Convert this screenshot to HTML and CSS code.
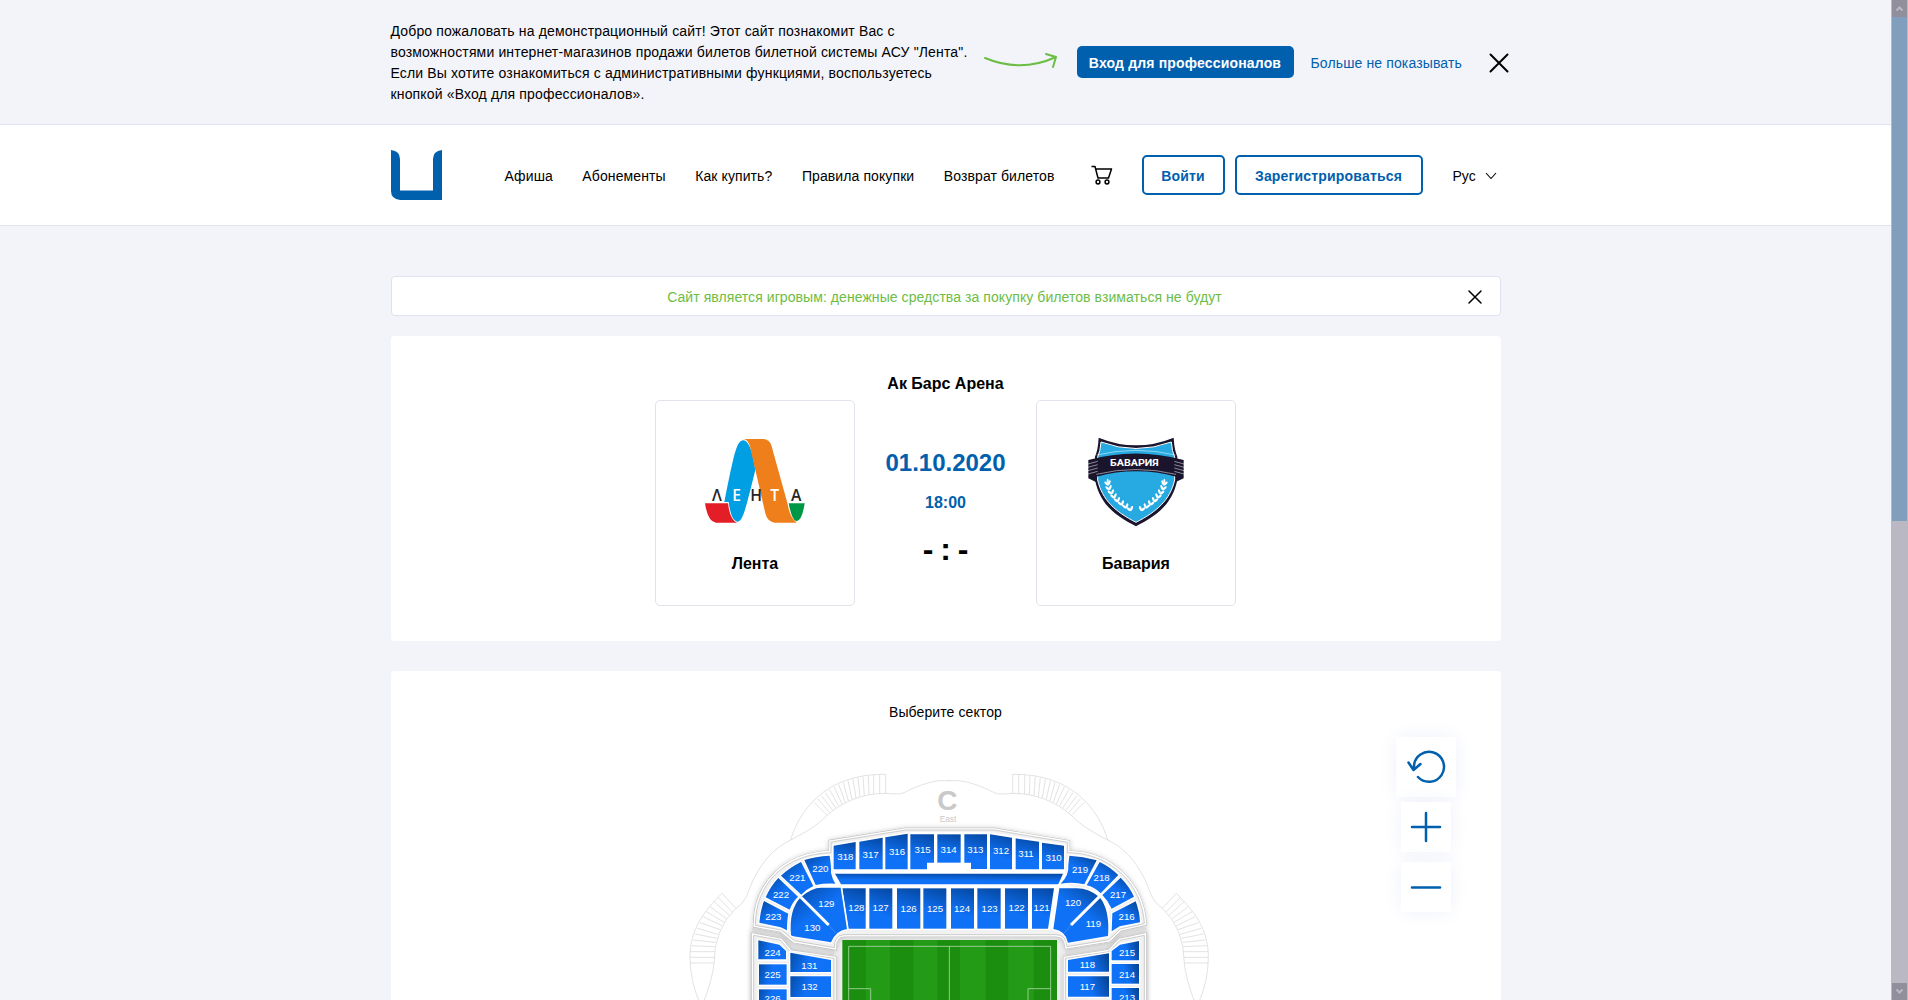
FILE: index.html
```html
<!DOCTYPE html>
<html lang="ru">
<head>
<meta charset="utf-8">
<title>Лента — Бавария</title>
<link rel="stylesheet" href="styles.css">
</head>
<body>
<div class="page">
  <div class="promo">
    <div class="container promo-row">
      <p class="promo-text">Добро пожаловать на демонстрационный сайт! Этот сайт познакомит Вас с<br>возможностями интернет-магазинов продажи билетов билетной системы АСУ "Лента".<br>Если Вы хотите ознакомиться с административными функциями, воспользуетесь<br>кнопкой «Вход для профессионалов».</p>
      <svg class="promo-arrow" width="74" height="18" viewBox="0 0 74 18"><path d="M1 6Q37 21 72 5M62 2L72 5L69 15" fill="none" stroke="#6cbd45" stroke-width="2" stroke-linecap="round" stroke-linejoin="round"/></svg>
      <a class="btn-pro">Вход для профессионалов</a>
      <a class="promo-hide">Больше не показывать</a>
      <svg class="promo-close" width="20" height="20" viewBox="0 0 20 20"><path d="M1.500 1.500L18.500 18.500M18.500 1.500L1.500 18.500" stroke="#000" stroke-width="2" stroke-linecap="round"/></svg>
    </div>
  </div>

  <header class="header">
    <div class="container header-row">
      <svg class="logo" width="51" height="50" viewBox="0 0 51 50"><path d="M0 0Q9 1 9 9V40.500H42V9Q42 1 51 0V50H9Q0 49 0 41Z" fill="#0060ae"/></svg>
      <nav class="nav"><a>Афиша</a><a>Абонементы</a><a>Как купить?</a><a>Правила покупки</a><a>Возврат билетов</a></nav>
      <svg class="cart" width="22" height="20" viewBox="0 0 22 20"><g fill="none" stroke="#000" stroke-width="1.500" stroke-linejoin="round"><path d="M.5 1.500H4L7 13H17.500L20.500 4H5"/><circle cx="7" cy="17" r="1.900"/><circle cx="16" cy="17" r="1.900"/></g></svg>
      <a class="btn login">Войти</a>
      <a class="btn signup">Зарегистрироваться</a>
      <div class="lang">Рус<svg width="12" height="8" viewBox="0 0 12 8"><path d="M1 1L6 6.500L11 1" fill="none" stroke="#000" stroke-width="1.100"/></svg></div>
    </div>
  </header>

  <main class="container">
    <div class="notice">
      <span>Сайт является игровым: денежные средства за покупку билетов взиматься не будут</span>
      <svg class="notice-close" width="14" height="14" viewBox="0 0 14 14"><path d="M1 1L13 13M13 1L1 13" stroke="#000" stroke-width="1.500" stroke-linecap="round"/></svg>
    </div>

    <section class="card match">
      <h2>Ак Барс Арена</h2>
      <div class="match-row">
        <div class="team">
          <svg width="120" height="110" viewBox="0 0 360 330">
            <path d="M30 235H99Q105 285 126 293H63Q38 290 30 235Z" fill="#e31e26"/>
            <path d="M145 46C124 48 118 85 88 231H101Q108 286 126 290C143 291 150 260 181 135Q168 47 145 46Z" fill="#009fe3"/>
            <path d="M147 42H207Q224 44 229 61L278 237Q284 276 305 293H238Q217 290 211 265L164 61Q158 45 147 42Z" fill="#ef7f1a"/>
            <path d="M281 235H329Q321 288 304 289Q290 285 281 235Z" fill="#009846"/>
            <g class="lenta-text" fill="#252525"><text x="51" y="229">Λ</text><text x="112" y="229" fill="#fff">Е</text><text x="166" y="229">Н</text><text x="226" y="229" fill="#fff">Т</text><text x="288" y="229">А</text></g>
          </svg>
          <b>Лента</b>
        </div>
        <div class="score">
          <div class="date">01.10.2020</div>
          <div class="time">18:00</div>
          <div class="result">- : -</div>
        </div>
        <div class="team">
          <svg class="crest" width="120" height="110" viewBox="0 0 360 330">
            <defs><g id="leaf"><ellipse cx="-7" cy="0" rx="8" ry="3.500" transform="rotate(38)"/><ellipse cx="7" cy="0" rx="8" ry="3.500" transform="rotate(-68)"/></g>
            <g id="laurel" fill="#fff"><use href="#leaf" x="85" y="180"/><use href="#leaf" x="88" y="194"/><use href="#leaf" x="95" y="207"/><use href="#leaf" x="103" y="219"/><use href="#leaf" x="113" y="230"/><use href="#leaf" x="125" y="240"/><use href="#leaf" x="138" y="249"/><use href="#leaf" x="152" y="257"/><ellipse cx="83" cy="168" rx="3" ry="7"/></g></defs>
            <path d="M56 38Q168 84 281 38Q283 75 292 95V165C277 235 238 267 168 304C98 267 60 235 45 165V95Q54 75 56 38Z" fill="#1a152d"/>
            <path d="M63 51Q168 90 274 51Q276 80 284 96V165C270 226 230 260 168 292C106 260 67 226 53 165V96Q61 80 63 51Z" fill="#27a9e1" stroke="#fff" stroke-width="3"/>
            <path d="M25 105Q167 66 311 105V160L289 170V155Q168 123 49 155V172L25 160Z" fill="#1a152d"/>
            <g fill="none" stroke="#fff" stroke-width="1.500"><path d="M50 90Q168 62 286 90M49 148Q168 119 288 148"/><path d="M24 117L53 109M24 127L53 119M24 137L53 129M24 147L53 139M312 117L283 109M312 127L283 119M312 137L283 129M312 147L283 139"/></g>
            <text class="bav-text" x="90" y="124" textLength="146" lengthAdjust="spacingAndGlyphs">БАВАРИЯ</text>
            <use href="#laurel"/><use href="#laurel" transform="translate(336) scale(-1 1)"/>
          </svg>
          <b>Бавария</b>
        </div>
      </div>
    </section>

    <section class="card sectors">
      <p>Выберите сектор</p>
      <svg class="map" width="540" height="240" viewBox="0 0 1620 720">
        <defs>
          <linearGradient id="up" x1=".65" y1="0" x2=".45" y2="1"><stop offset="0" stop-color="#064ba8"/><stop offset=".65" stop-color="#0f71f6"/></linearGradient>
          <linearGradient id="lt" x1="0" y1=".3" x2="1" y2=".5"><stop offset="0" stop-color="#0650b0"/><stop offset=".45" stop-color="#0f71f6"/></linearGradient>
          <linearGradient id="rt" x1="1" y1=".3" x2="0" y2=".5"><stop offset="0" stop-color="#064597"/><stop offset=".5" stop-color="#0f71f6"/></linearGradient>
          <linearGradient id="cl" x1=".1" y1="0" x2=".7" y2=".8"><stop offset="0" stop-color="#064ba8"/><stop offset=".6" stop-color="#0f71f6"/></linearGradient>
          <linearGradient id="cr" x1=".9" y1="0" x2=".3" y2=".8"><stop offset="0" stop-color="#064597"/><stop offset=".6" stop-color="#0f71f6"/></linearGradient>
          <filter id="sh" x="-5%" y="-5%" width="110%" height="110%"><feDropShadow dx="0" dy="1" stdDeviation="8" flood-opacity=".2"/></filter>
          <g id="outer" fill="none" stroke="#dcdcdc" stroke-width="2.500">
            <path d="M168 445C204 420 202 395 222 355C250 300 285 262 332 240C380 215 412 196 441 166C490 123 550 100 617 100C672 105 665 100 697 86Q745 65 780 62H812"/>
            <path d="M332 240C355 160 430 40 617 43V100"/>
            <path d="M168 445L126 400C70 455 30 510 30 592Q30 665 62 735M168 445Q103 505 102 610Q98 655 68 735"/>
            <path d="M402 127l39 39M413 116l36 42M424 107l34 44M436 98l31 46M449 89l27 49M462 81l24 51M476 73l19 53M490 67l15 55M504 62l12 56M519 57l9 57M534 53l6 57M549 50l4 57M565 47l2 57M581 45v57M599 44v57"/>
            <path d="M114 412l43 44M102 425l46 41M90 440l50 37M79 455l54 32M70 470l57 28M60 488l61 21M52 505l62 18M45 522l66 13M39 540l69 7M35 557l70 3M31 575h73M30 592h73M30 609h72"/>
          </g>
          <path id="bowl" d="M226 496C226 370 315 282 453 278V246L677 210H942L1163 247V278C1300 279 1387 380 1393 491L1320 507L1287 539L1161 560Q1158 524 1128 524H492Q462 526 463 563L343 542L304 510Z"/>
          <path id="left" d="M221 526L302 541L331 576L462 595V760H221Z"/>
          <path id="right" d="M1393 526L1320 541L1287 575L1156 595V760H1393Z"/>
        </defs>
        <use href="#outer"/><use href="#outer" transform="translate(1615) scale(-1 1)"/>
        <path d="M215 502V760H1400V502L1160 550H470Z" fill="#e6e6e6" filter="url(#sh)"/>
        <rect x="462" y="524" width="694" height="220" fill="#eee"/>
        <g fill="#f1f1f1" stroke-linejoin="miter"><g stroke="#c3c3c3" stroke-width="15" filter="url(#sh)"><use href="#bowl"/><use href="#left"/><use href="#right"/></g><g stroke="#fff" stroke-width="11"><use href="#bowl"/><use href="#left"/><use href="#right"/></g><g stroke="#c3c3c3" stroke-width="2.500"><use href="#bowl"/><use href="#left"/><use href="#right"/></g></g>
        <path d="M458 254L690 216H930L1156 252L1156 374L1285 400L1290 505L1128 510H492L325 510L355 390L462 370Z" fill="#fff"/>
        <g stroke="#fff" stroke-width="8" stroke-linejoin="miter" paint-order="stroke">
          <g fill="url(#up)">
            <path d="M461 257L527 246V328H461Z"/><path d="M538 245L608 233V328H538Z"/><path d="M616 232L683 221V328H616Z"/><path d="M691 223H762V308H741V328H691Z"/><path d="M772 223H842V308H772Z"/><path d="M853 223H921V327H873V308H853Z"/><path d="M930 223L996 233V328H930Z"/><path d="M1007 235L1077 245V328H1007Z"/><path d="M1086 248L1152 257V328H1086Z"/>
            <path d="M465 341H1149L1135 373H483Z"/>
            <path d="M487 385H557V506H506Z"/><path d="M568 385H637V506H568Z"/><path d="M651 385H721V506H651Z"/><path d="M730 385H799V506H730Z"/><path d="M813 385H882V506H813Z"/><path d="M892 385H962V506H892Z"/><path d="M975 385H1044V506H975Z"/><path d="M1056 385H1122L1104 506H1056Z"/>
          </g>
          <g fill="url(#cl)"><path d="M373 300Q406 289 449 287Q454 320 453 338Q457 357 466 371Q430 370 407 375Z"/><path d="M303 347Q330 322 363 306L400 378Q378 388 364 404Z"/><path d="M257 412Q272 378 295 354L354 410Q336 428 329 449Z"/><path d="M238 488Q242 448 252 423L325 461Q321 480 321 511L302 502Z"/><path d="M333 526Q326 450 362 412Q395 382 426 383H482L501 507Q467 512 453 547L340 529Z"/></g>
          <g fill="url(#cr)"><path d="M1168 287Q1210 289 1250 301L1213 373Q1180 365 1142 371Q1168 345 1165 314Z"/><path d="M1259 306Q1290 321 1315 345L1262 400Q1242 380 1220 376Z"/><path d="M1322 353Q1348 379 1362 410L1295 446Q1285 423 1267 405Z"/><path d="M1297 460L1367 424Q1379 455 1380 487L1319 499L1295 514Z"/><path d="M1138 385H1185Q1225 383 1259 412Q1290 450 1284 528L1164 548Q1158 513 1120 507Z"/></g>
          <g fill="url(#lt)"><path d="M235 541L298 554L318 573V598H235Z"/><path d="M237 613H320V674H237Z"/><path d="M237 688H320V730H237Z"/><path d="M331 578L453 600V636H331Z"/><path d="M331 649H453V711H331Z"/></g>
          <g fill="url(#rt)"><path d="M1377 543V601H1295V573L1320 554Z"/><path d="M1295 612H1377V671H1295Z"/><path d="M1295 684H1377V730H1295Z"/><path d="M1164 600L1287 580V635H1164Z"/><path d="M1164 649H1287V710H1164Z"/></g>
        </g>
        <path d="M362 411L446 495M1259 409L1173 495" stroke="#fff" stroke-width="9"/><path d="M446 495L468 520M1173 495L1150 522" stroke="#8fbdf5"/>
        <rect x="487" y="540" width="644" height="190" fill="#1b8e10"/>
        <path d="M558 540h72v190h-72zM700 540h72v190h-72zM840 540h77v190h-77zM985 540h76v190h-76z" fill="#239b17"/>
        <path d="M506 735V559H1112V735M808 559V735M506 686H572V735M1112 686H1044V735" fill="none" stroke="#a9d6a4" stroke-width="2.500"/>
        <g class="map-side"><text class="side-letter" x="802" y="151">C</text><text class="side-name" x="804" y="187">East</text></g>
        <g class="map-labels">
          <text x="496" y="301">318</text><text x="572" y="293">317</text><text x="651" y="284">316</text><text x="728" y="278">315</text><text x="806" y="278">314</text><text x="886" y="278">313</text><text x="963" y="282">312</text><text x="1038" y="291">311</text><text x="1121" y="302">310</text>
          <text x="421" y="336">220</text><text x="352" y="363">221</text><text x="303" y="414">222</text><text x="280" y="480">223</text><text x="439" y="440">129</text><text x="397" y="512">130</text>
          <text x="529" y="453">128</text><text x="602" y="453">127</text><text x="686" y="455">126</text><text x="765" y="455">125</text><text x="846" y="455">124</text><text x="929" y="455">123</text><text x="1010" y="453">122</text><text x="1085" y="453">121</text>
          <text x="1179" y="438">120</text><text x="1240" y="501">119</text><text x="1200" y="338">219</text><text x="1265" y="363">218</text><text x="1314" y="414">217</text><text x="1340" y="481">216</text>
          <text x="278" y="588">224</text><text x="278" y="655">225</text><text x="278" y="727">226</text><text x="388" y="626">131</text><text x="389" y="690">132</text>
          <text x="1341" y="588">215</text><text x="1341" y="654">214</text><text x="1341" y="722">213</text><text x="1222" y="625">118</text><text x="1222" y="690">117</text>
        </g>
      </svg>
      <div class="zoom-tools">
        <button class="reset"><svg width="60" height="60" viewBox="0 0 60 60"><path d="M22 40A15 15 0 1 0 18 29L17.500 33M12.500 25.500L17.500 33L24.500 27" fill="none" stroke="#0060ae" stroke-width="2.500" stroke-linecap="round" stroke-linejoin="round"/></svg></button>
        <button><svg width="50" height="50" viewBox="0 0 50 50"><path d="M11 25H39M25 11V39" stroke="#0060ae" stroke-width="2.500" stroke-linecap="round"/></svg></button>
        <button class="minus"><svg width="50" height="50" viewBox="0 0 50 50"><path d="M11 25.500H39" stroke="#0060ae" stroke-width="2.500" stroke-linecap="round"/></svg></button>
      </div>
    </section>
  </main>
</div>
<div class="scrollbar">
  <svg width="15" height="17" viewBox="0 0 15 17"><path d="M4.500 10.500L7.500 7.500L10.500 10.500" fill="none" stroke="#b9b8c3" stroke-width="2"/></svg>
  <div class="thumb"></div>
  <svg width="15" height="17" viewBox="0 0 15 17"><path d="M4.500 6.500L7.500 9.500L10.500 6.500" fill="none" stroke="#b9b8c3" stroke-width="2"/></svg>
</div>
</body>
</html>
```
FILE: styles.css
```css
* { box-sizing: border-box; }
body {
  margin: 0;
  height: 1000px;
  overflow: hidden;
  display: flex;
  background: #f3f4fa;
  color: #000;
  font: 14px/21px "Liberation Sans", Arial, sans-serif;
}
svg { display: block; flex: none; }
p, h2 { margin: 0; }
.page { width: 1891px; height: 1000px; overflow: hidden; }
.container { width: 1110px; margin: 0 auto; }

.promo { height: 125px; border-bottom: 1px solid #dfe2ec; }
.promo-row { display: flex; align-items: center; height: 124px; white-space: nowrap; }
.promo-row > * { flex: none; }
.promo-text { width: 593px; padding-top: 2px; letter-spacing: .15px; }
.promo-arrow { margin-top: -2px; }
.btn-pro {
  width: 217px;
  height: 32px;
  margin-left: 19px;
  border-radius: 5px;
  background: #0060ae;
  color: #fff;
  font-weight: bold;
  line-height: 34px;
  text-align: center;
  letter-spacing: .17px;
}
.promo-hide { width: 151px; margin: 2px 27px 0 17px; color: #0060ae; letter-spacing: .13px; }
.promo-close { margin-top: 2px; }

.header { height: 101px; background: #fff; border-bottom: 1px solid #dfe2ec; }
.header-row { display: flex; align-items: center; height: 100px; white-space: nowrap; }
.nav { display: flex; flex: none; gap: 29.5px; width: 586px; margin-left: 63px; padding-top: 2px; letter-spacing: .1px; }
.cart { margin-right: 29px; }
.btn {
  flex: none;
  height: 40px;
  border: 2px solid #0060ae;
  border-radius: 5px;
  color: #0060ae;
  font-weight: bold;
  line-height: 38px;
  text-align: center;
  letter-spacing: .18px;
}
.login { width: 83px; margin-right: 10px; }
.signup { width: 188px; }
.lang { display: flex; align-items: center; gap: 9px; margin-left: 30px; padding-top: 2px; }

.notice {
  display: flex;
  align-items: center;
  height: 40px;
  margin: 50px 0 20px;
  padding-right: 18px;
  border: 1px solid #dfe2ec;
  border-radius: 4px;
  background: #fff;
  color: #6cbd45;
}
.notice span { flex: 1; padding: 2px 0 0 10px; text-align: center; text-indent: 20px; letter-spacing: .07px; }
.notice-close { margin-top: 2px; }
.card { border-radius: 4px; background: #fff; }
.match { height: 305px; padding-top: 36px; }
.match h2 { height: 28px; font-size: 16px; line-height: 24px; text-align: center; }
.match-row { display: flex; justify-content: center; }
.team {
  display: flex;
  flex-direction: column;
  align-items: center;
  width: 200px;
  height: 206px;
  padding-top: 24px;
  border: 1px solid #e1e3eb;
  border-radius: 5px;
}
.crest { margin-left: 8px; }
.team b { margin-top: 17px; font-size: 16px; line-height: 24px; }
.lenta-text { font: 600 47px "Open Sans", sans-serif; }
.bav-text { fill: #fff; font: bold 26px Roboto, sans-serif; }
.score { width: 181px; padding-top: 45px; text-align: center; font-weight: bold; }
.date { color: #0060ae; font-size: 24px; line-height: 36px; }
.time { margin-top: 10px; color: #0060ae; font-size: 16px; line-height: 24px; }
.result { margin-top: 12px; font-size: 32px; line-height: 44px; word-spacing: -2px; }

.sectors { position: relative; height: 360px; margin-top: 30px; padding-top: 31px; text-align: center; }
.sectors p { letter-spacing: .1px; }
.map { margin: 37px 0 0 289px; }
.map-labels { fill: #fff; font-size: 29px; text-anchor: middle; }
.map-side { fill: #c9c9c9; text-anchor: middle; }
.side-letter { font-size: 84px; font-weight: bold; }
.side-name { font-size: 25px; }
/* Controls float above the stadium plan */
.zoom-tools {
  position: absolute;
  top: 66px;
  right: 45px;
  display: flex;
  flex-direction: column;
  align-items: center;
}
button { width: 50px; height: 50px; padding: 0; border: 0; background: #fff; box-shadow: 0 0 20px #eff1fa; }
.reset { width: 60px; height: 60px; margin-bottom: 5px; }
.minus { margin-top: 10px; }

.scrollbar { width: 17px; height: 1000px; padding: 0 1px; background: #b9b8c3; display: flex; flex-direction: column; }
.scrollbar svg { background: #918f9c; }
.scrollbar svg:last-child { margin-top: auto; }
.thumb { height: 504px; background: #829ebd; }
```
